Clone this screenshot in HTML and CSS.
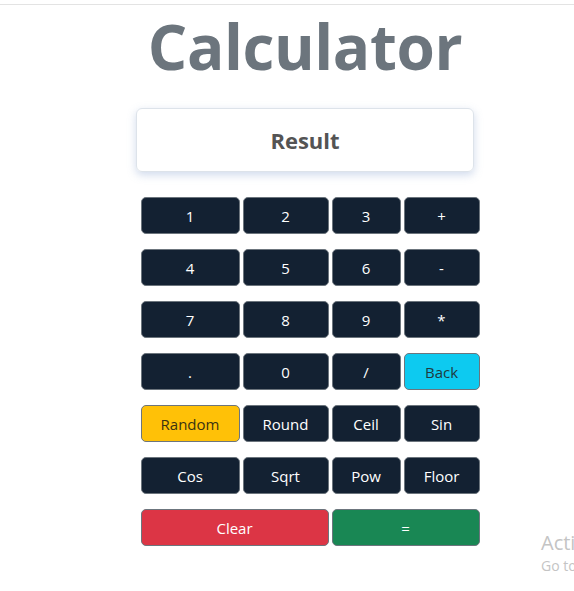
FILE: index.html
```html
<!DOCTYPE html>
<html>
<head>
<meta charset="utf-8">
<link rel="stylesheet" href="styles.css">
</head>
<body>
<div class="topline"></div>
<main class="app">
  <h1 class="title">Calculator</h1>
  <div class="result">Result</div>
  <div class="keys">
    <button class="key">1</button>
    <button class="key">2</button>
    <button class="key">3</button>
    <button class="key">+</button>
    <button class="key">4</button>
    <button class="key">5</button>
    <button class="key">6</button>
    <button class="key">-</button>
    <button class="key">7</button>
    <button class="key">8</button>
    <button class="key">9</button>
    <button class="key">*</button>
    <button class="key">.</button>
    <button class="key">0</button>
    <button class="key">/</button>
    <button class="key info">Back</button>
    <button class="key warning">Random</button>
    <button class="key">Round</button>
    <button class="key">Ceil</button>
    <button class="key">Sin</button>
    <button class="key">Cos</button>
    <button class="key">Sqrt</button>
    <button class="key">Pow</button>
    <button class="key">Floor</button>
    <button class="key danger span2">Clear</button>
    <button class="key success span2">=</button>
  </div>
</main>
<div class="watermark">
  <div class="wm-title">Acti</div>
  <div class="wm-sub">Go to</div>
</div>
</body>
</html>
```
FILE: styles.css
```css
html, body {
  margin: 0;
  padding: 0;
  background: #ffffff;
  font-family: "Open Sans", "Noto Sans", sans-serif;
  overflow: hidden;
}
body {
  width: 574px;
  height: 591px;
  position: relative;
}
.topline {
  margin-top: 4px;
  height: 1px;
  background: #e3e3e3;
}
.app {
  margin-left: 136px;
  width: 338px;
  display: flex;
  flex-direction: column;
  align-items: center;
}
.title {
  margin: 0;
  font-size: 62px;
  line-height: 82px;
  font-weight: 700;
  color: #6c757d;
  letter-spacing: -0.4px;
}
.result {
  margin-top: 21px;
  width: 338px;
  height: 64px;
  box-sizing: border-box;
  border: 1px solid #dde3ea;
  border-radius: 6px;
  box-shadow: 0 3px 8px rgba(120, 150, 200, 0.35);
  display: flex;
  align-items: center;
  justify-content: center;
  font-size: 22px;
  font-weight: 700;
  color: #545454;
}
.keys {
  margin-top: 25px;
  margin-left: 10px;
  display: grid;
  grid-template-columns: 99px 86px 69px 76px;
  column-gap: 3px;
  row-gap: 15px;
}
.key {
  height: 37px;
  border: 1px solid #6c757d;
  border-radius: 5px;
  background: #132132;
  color: #ffffff;
  font-family: "Open Sans", "Noto Sans", sans-serif;
  font-size: 15px;
  padding: 0;
  display: flex;
  align-items: center;
  justify-content: center;
}
.key.info {
  background: #0dcaf0;
  color: #1f3a3f;
}
.key.warning {
  background: #ffc107;
  color: #3a3312;
}
.key.danger {
  background: #dc3545;
}
.key.success {
  background: #198754;
}
.span2 {
  grid-column: span 2;
}
.watermark {
  position: absolute;
  left: 541px;
  top: 529px;
  white-space: nowrap;
  color: #c4c4c4;
}
.wm-title {
  font-size: 20px;
  line-height: 27px;
}
.wm-sub {
  font-size: 14px;
  line-height: 19px;
}
```
